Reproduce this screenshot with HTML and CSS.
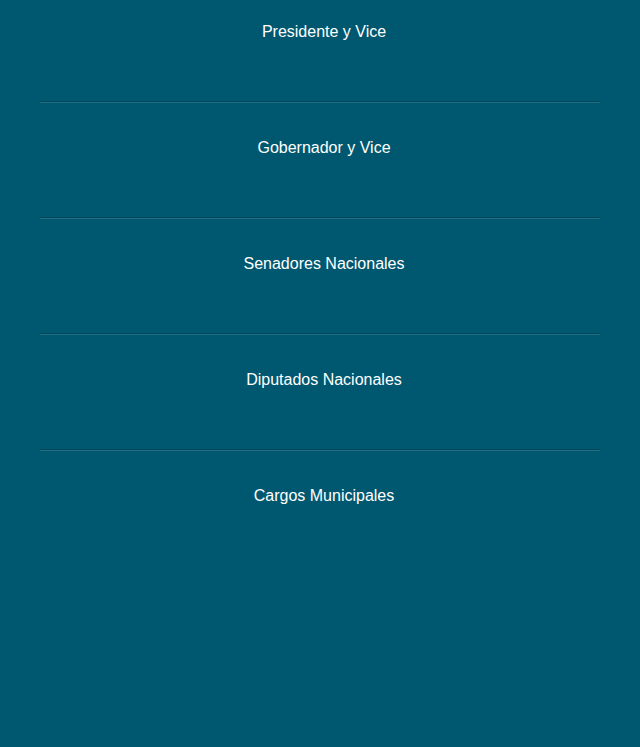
FILE: index.html
```html
<!DOCTYPE html>
<html lang="es">
<head>
<meta charset="utf-8">
<title>Cargos</title>
<link rel="stylesheet" href="styles.css">
</head>
<body>
<main class="list">
  <section class="item"><h2 class="title">Presidente y Vice</h2></section>
  <hr class="sep">
  <section class="item"><h2 class="title">Gobernador y Vice</h2></section>
  <hr class="sep">
  <section class="item"><h2 class="title">Senadores Nacionales</h2></section>
  <hr class="sep">
  <section class="item"><h2 class="title">Diputados Nacionales</h2></section>
  <hr class="sep">
  <section class="item"><h2 class="title">Cargos Municipales</h2></section>
</main>
</body>
</html>
```
FILE: styles.css
```css
html, body {
  margin: 0;
  padding: 0;
  background: #005870;
  height: 100%;
}
body {
  font-family: "Liberation Sans", Arial, sans-serif;
  color: #ffffff;
}
.list {
  display: flex;
  flex-direction: column;
}
.item {
  height: 101px;
  padding: 23px 0 0 8px;
  box-sizing: border-box;
}
.title {
  margin: 0;
  font-size: 16px;
  font-weight: normal;
  line-height: 18px;
  text-align: center;
}
.sep {
  margin: 0 40px 13px;
  height: 0;
  border: 0;
  border-top: 1px solid #00475c;
  border-bottom: 1px solid #1f6e84;
}
```
